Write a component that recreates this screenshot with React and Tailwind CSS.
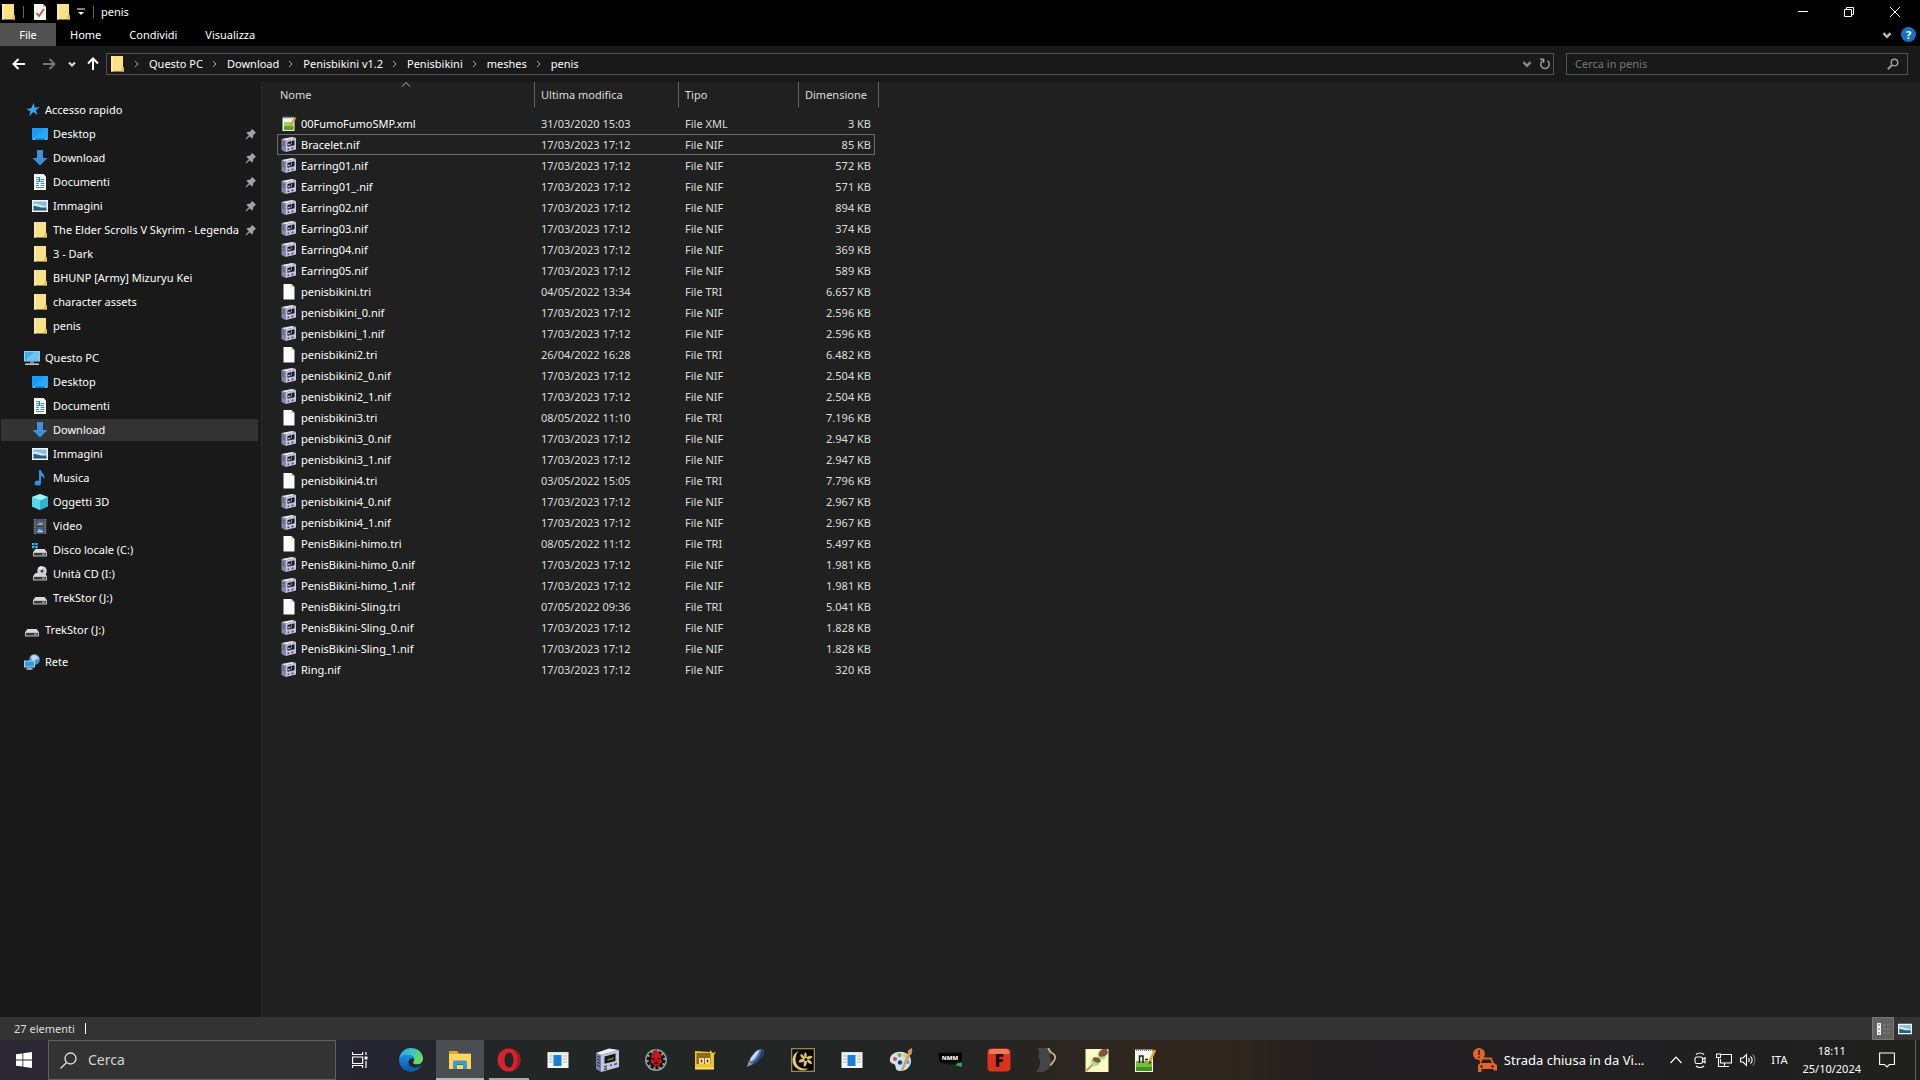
import React from 'react';

const QUICK_ACCESS = [
  { icon: 'desktop', label: 'Desktop', pinned: true },
  { icon: 'download', label: 'Download', pinned: true },
  { icon: 'document', label: 'Documenti', pinned: true },
  { icon: 'picture', label: 'Immagini', pinned: true },
  { icon: 'folder', label: 'The Elder Scrolls V Skyrim - Legenda', pinned: true },
  { icon: 'folder', label: '3 - Dark' },
  { icon: 'folder', label: 'BHUNP [Army] Mizuryu Kei' },
  { icon: 'folder', label: 'character assets' },
  { icon: 'folder', label: 'penis' },
];

const THIS_PC = [
  { icon: 'desktop', label: 'Desktop' },
  { icon: 'document', label: 'Documenti' },
  { icon: 'download', label: 'Download', active: true },
  { icon: 'picture', label: 'Immagini' },
  { icon: 'music', label: 'Musica' },
  { icon: 'cube', label: 'Oggetti 3D' },
  { icon: 'video', label: 'Video' },
  { icon: 'localDisk', label: 'Disco locale (C:)' },
  { icon: 'cdDrive', label: 'Unità CD (I:)' },
  { icon: 'drive', label: 'TrekStor (J:)' },
];

const GROUPS = [
  { icon: 'star', label: 'Accesso rapido', items: QUICK_ACCESS },
  { icon: 'pc', label: 'Questo PC', items: THIS_PC },
  { icon: 'drive', label: 'TrekStor (J:)', items: [] },
  { icon: 'network', label: 'Rete', items: [] },
];

const CRUMBS = ['Questo PC', 'Download', 'Penisbikini v1.2', 'Penisbikini', 'meshes', 'penis'];

const NIF_DATE = '17/03/2023 17:12';

const FILES = [
  ['00FumoFumoSMP.xml', '31/03/2020 15:03', 'XML', '3 KB'],
  ['Bracelet.nif', NIF_DATE, 'NIF', '85 KB'],
  ['Earring01.nif', NIF_DATE, 'NIF', '572 KB'],
  ['Earring01_.nif', NIF_DATE, 'NIF', '571 KB'],
  ['Earring02.nif', NIF_DATE, 'NIF', '894 KB'],
  ['Earring03.nif', NIF_DATE, 'NIF', '374 KB'],
  ['Earring04.nif', NIF_DATE, 'NIF', '369 KB'],
  ['Earring05.nif', NIF_DATE, 'NIF', '589 KB'],
  ['penisbikini.tri', '04/05/2022 13:34', 'TRI', '6.657 KB'],
  ['penisbikini_0.nif', NIF_DATE, 'NIF', '2.596 KB'],
  ['penisbikini_1.nif', NIF_DATE, 'NIF', '2.596 KB'],
  ['penisbikini2.tri', '26/04/2022 16:28', 'TRI', '6.482 KB'],
  ['penisbikini2_0.nif', NIF_DATE, 'NIF', '2.504 KB'],
  ['penisbikini2_1.nif', NIF_DATE, 'NIF', '2.504 KB'],
  ['penisbikini3.tri', '08/05/2022 11:10', 'TRI', '7.196 KB'],
  ['penisbikini3_0.nif', NIF_DATE, 'NIF', '2.947 KB'],
  ['penisbikini3_1.nif', NIF_DATE, 'NIF', '2.947 KB'],
  ['penisbikini4.tri', '03/05/2022 15:05', 'TRI', '7.796 KB'],
  ['penisbikini4_0.nif', NIF_DATE, 'NIF', '2.967 KB'],
  ['penisbikini4_1.nif', NIF_DATE, 'NIF', '2.967 KB'],
  ['PenisBikini-himo.tri', '08/05/2022 11:12', 'TRI', '5.497 KB'],
  ['PenisBikini-himo_0.nif', NIF_DATE, 'NIF', '1.981 KB'],
  ['PenisBikini-himo_1.nif', NIF_DATE, 'NIF', '1.981 KB'],
  ['PenisBikini-Sling.tri', '07/05/2022 09:36', 'TRI', '5.041 KB'],
  ['PenisBikini-Sling_0.nif', NIF_DATE, 'NIF', '1.828 KB'],
  ['PenisBikini-Sling_1.nif', NIF_DATE, 'NIF', '1.828 KB'],
  ['Ring.nif', NIF_DATE, 'NIF', '320 KB'],
];

const DRIVE_BODY = (
  <>
    <path d="M3.5 7h9l2.5 3.2H1z" fill="#d9d9d9" />
    <rect x="1" y="10" width="14" height="4.5" fill="#bfbfbf" />
    <rect x="2" y="11" width="12" height="2.5" fill="#3a3a3a" />
    <rect x="10.5" y="11.7" width="2" height="1" fill="#e8f4e8" />
  </>
);

/* 16x16 drawings for the tree, the list and the title bar */
const GLYPHS = {
  folder: (
    <>
      <path d="M2 0h12v11l1 1v3.5H2z" fill="#fbe08b" />
      <path d="M2 0h2v15.5H2z" fill="#ffeaa6" />
      <path d="M12.5 15.5v-3.2L14 10.6l1 1.4v3.5z" fill="#e3bd5a" />
    </>
  ),
  star: (
    <path
      d="M8.6 1l1.2 4.4 5.2-.2-4.3 3 1.9 4.8-4.3-3-4.2 4.5 1.3-5.3L1.3 7l4.8-.8z"
      transform="translate(1)"
      fill="#35a7ee"
    />
  ),
  desktop: (
    <>
      <rect y="2" width="16" height="12" fill="#1a9bf5" />
      <path d="M0 14L12 2h4v12z" fill="#35aefb" opacity=".6" />
      <path d="M0 12.5h16V14H0z" fill="#1378c9" />
      <path d="M1 13h2M13 13h2" stroke="#bfe4ff" />
    </>
  ),
  download: <path d="M5 0h6v8h4.5L8 15.500 .5 8H5z" fill="#3f8fdc" />,
  document: (
    <>
      <path d="M2 0h9.500L14 2.500V16H2z" fill="#f4f6f7" />
      <path d="M4 3.500h3M4 5.500h3M8.500 5.500h4M4 7.500h8M4 9.500h3M4 11.500h3M8.500 9.500h4M8.500 11.500h4M4 13.500h8" stroke="#4c90ab" />
      <path d="M7.500 3v5" stroke="#2f7594" />
    </>
  ),
  picture: (
    <>
      <rect y="2" width="16" height="12" fill="#f3f5f6" />
      <rect x="1.500" y="3.500" width="13" height="9" fill="#7fbdea" />
      <path d="M1.500 6c4-1.500 7 2 13 2v4.500h-13z" fill="#d5e9f3" />
      <path d="M1.500 8c3-.5 5 2 13 1.500v3h-13z" fill="#2d5e78" />
    </>
  ),
  music: (
    <>
      <path d="M7 0h2c.3 3 4.500 4.500 3.500 9.500C12 7.500 11 6.500 9 6v7H7z" fill="#2f93e0" />
      <ellipse cx="5.800" cy="13" rx="3.200" ry="2.600" fill="#2f93e0" />
    </>
  ),
  cube: (
    <>
      <path d="M8 0l8 3v9.500L8 16l-8-3.500V3z" fill="#2fb5cf" />
      <path d="M8 0l8 3-8 3.500L0 3z" fill="#a5eef5" />
      <path d="M0 3l8 3.500V16l-8-3.500z" fill="#5dd5e6" />
    </>
  ),
  video: (
    <>
      <rect x="1.500" y="1" width="13" height="15" fill="#4a4a4a" />
      <path d="M3 1v15M13 1v15" stroke="#a5a5a5" strokeDasharray="1 1" />
      <rect x="4.500" y="1.500" width="7" height="6" fill="#3f5f96" />
      <rect x="4.500" y="9" width="7" height="6" fill="#3f5f96" />
      <path d="M5 6.500l3-2 3 1v1.500H5z" fill="#b9a85c" />
      <path d="M5 14l2-3 4 2v1.500H5z" fill="#9fb9df" />
    </>
  ),
  drive: DRIVE_BODY,
  localDisk: (
    <>
      {DRIVE_BODY}
      <path d="M0 1h2.500v2.200H0zM3.200 1h2.500v2.200H3.200zM0 4h2.500v2.200H0zM3.200 4h2.500v2.200H3.200z" fill="#35b9e9" />
    </>
  ),
  cdDrive: (
    <>
      {DRIVE_BODY}
      <circle cx="10" cy="5" r="4.800" fill="#cfd1d3" />
      <path d="M10 5L6 2a5 5 0 014-1.800z" fill="#f5f5f5" />
      <circle cx="10" cy="5" r="1.500" fill="#3b3b3b" />
    </>
  ),
  pc: (
    <>
      <rect y="1" width="16" height="10.500" fill="#8bd0f5" />
      <rect x="1" y="2" width="14" height="8.500" fill="#43a9e8" />
      <path d="M1 10.500L10 2h5v8.500z" fill="#6fc2f2" />
      <path d="M6 11.500h4v2H6z" fill="#80909a" />
      <path d="M1 14.200h14" stroke="#c7d5dd" strokeWidth="1.500" />
    </>
  ),
  network: (
    <>
      <circle cx="10.500" cy="5.500" r="5.400" fill="#4b93c0" />
      <path d="M7 2c3-2 6-1 8 2-1 2-4 1-5 3S7 5 7 2z" fill="#b8dcec" />
      <rect y="6.500" width="11" height="7" fill="#9cd9fa" />
      <rect x="1" y="7.500" width="9" height="5" fill="#2f9be2" />
      <path d="M2.500 15h6M5.500 13.500V15" stroke="#b4c9d4" strokeWidth="1.300" />
    </>
  ),
  XML: (
    <>
      <path d="M1.500 1.500h12V15h-12z" fill="#f6f8ef" />
      <path d="M3 6h9.500v8H3z" fill="#9fd25a" />
      <path d="M3 10h9.500v4H3z" fill="#58a524" />
      <path d="M2 1.500h11" stroke="#888" strokeWidth="2" strokeDasharray="1 1" />
      <path d="M14.500 1.500L9 10" stroke="#e09a35" strokeWidth="2" />
    </>
  ),
  NIF: (
    <>
      <path d="M.5 2L4.500 3.500V15l-4-2z" fill="#8586a6" />
      <path d="M.5 2L11 0l4 1L4.500 3.500z" fill="#e6e6f6" />
      <path d="M4.500 3.500L15 1v11.500L4.500 15z" fill="#c6c6e2" />
      <path d="M6.500 5l7-1.700v4.900l-7 1.600z" fill="#17191d" />
      <path d="M7 7.500h2.500" stroke="#a9adc6" strokeWidth="1.600" />
      <path d="M10.500 4.500v3" stroke="#8388a0" />
      <path d="M6.500 12.500l1.800-.4M10.500 11.600l2-.4" stroke="#505172" strokeWidth="1.700" />
      <path d="M1.500 5l2 1M1.500 7.500l2 1" stroke="#3a3b55" strokeWidth=".9" />
    </>
  ),
  TRI: (
    <>
      <path d="M2.500 0h8l3 3v12.500h-11z" fill="#fafafa" />
      <path d="M10.500 0v3h3z" fill="#bcbcbc" />
    </>
  ),
};

function Glyph({ name, className = '' }) {
  return (
    <svg viewBox="0 0 16 16" className={`size-4 shrink-0 ${className}`} aria-hidden="true">
      {GLYPHS[name]}
    </svg>
  );
}

function Chevron({ className = '', d = 'M2 3.500l3 3 3-3' }) {
  return (
    <svg viewBox="0 0 10 10" className={`shrink-0 ${className}`} fill="none" stroke="currentColor" aria-hidden="true">
      <path d={d} />
    </svg>
  );
}

function TitleBar() {
  return (
    <header className="flex h-[23px] items-center justify-between bg-black">
      <div className="flex items-center">
        <Glyph name="folder" />
        <span className="ml-[7px] h-3 w-px bg-[#666]" />
        <button type="button" aria-label="Proprietà" className="ml-2">
          <svg viewBox="0 0 16 16" className="size-4" aria-hidden="true">
            <path d="M2 0h9l3 3v13H2z" fill="#f6f3f3" />
            <path d="M11 0v3h3z" fill="#bbb" />
            <path d="M4.500 9l2.500 3 5-7" fill="none" stroke="#bd5a43" strokeWidth="1.800" />
          </svg>
        </button>
        <button type="button" aria-label="Nuova cartella" className="ml-[7px]">
          <Glyph name="folder" />
        </button>
        <button type="button" aria-label="Personalizza barra" className="ml-[6px] text-white">
          <svg viewBox="0 0 8 8" className="size-2" aria-hidden="true">
            <path d="M0 1h8" stroke="currentColor" />
            <path d="M1 4h6L4 7z" fill="currentColor" />
          </svg>
        </button>
        <span className="ml-2 h-3 w-px bg-[#666]" />
        <h1 className="ml-[7px]">penis</h1>
      </div>
      <div className="flex pr-0.5">
        <button type="button" aria-label="Riduci a icona" className="flex h-[21px] w-[46px] items-center justify-center">
          <span className="h-px w-[10px] bg-white" />
        </button>
        <button type="button" aria-label="Ripristina" className="flex h-[21px] w-[46px] items-center justify-center">
          <svg viewBox="0 0 10 10" className="size-[10px]" fill="none" stroke="#fff" aria-hidden="true">
            <path d="M.5 2.500h7v7h-7zM2.500 2.500v-2h7v7h-2" />
          </svg>
        </button>
        <button type="button" aria-label="Chiudi" className="flex h-[21px] w-[46px] items-center justify-center">
          <svg viewBox="0 0 10 10" className="size-[10px]" stroke="#fff" aria-hidden="true">
            <path d="M0 0l10 10M10 0L0 10" />
          </svg>
        </button>
      </div>
    </header>
  );
}

function RibbonTabs() {
  return (
    <div className="flex h-[23px] items-center justify-between bg-black">
      <nav className="flex h-full items-center" aria-label="Barra multifunzione">
        <button type="button" className="h-full w-14 bg-[#515151]">File</button>
        <button type="button" className="px-[14px]">Home</button>
        <button type="button" className="px-[14px]">Condividi</button>
        <button type="button" className="px-[14px]">Visualizza</button>
      </nav>
      <div className="flex items-center gap-2 pr-1">
        <button type="button" aria-label="Espandi barra multifunzione">
          <Chevron className="size-3 stroke-2 text-[#bbb]" />
        </button>
        <button
          type="button"
          aria-label="Guida"
          className="size-[15px] rounded-full bg-[#1672c4] text-center text-[11px] leading-[15px] font-bold text-white"
        >
          ?
        </button>
      </div>
    </div>
  );
}

function AddressRow() {
  return (
    <div className="flex h-9 items-center gap-3 pr-3">
      <div className="flex min-w-0 flex-1 items-center">
        <div className="flex w-[106px] shrink-0 items-center pl-3">
          <button type="button" aria-label="Indietro">
            <svg viewBox="0 0 14 14" className="size-[14px]" fill="none" stroke="#fff" strokeWidth="2" aria-hidden="true">
              <path d="M13 7H2M6.500 2L1.500 7l5 5" />
            </svg>
          </button>
          <button type="button" aria-label="Avanti" className="ml-4">
            <svg viewBox="0 0 14 14" className="size-[14px]" fill="none" stroke="#777" strokeWidth="2" aria-hidden="true">
              <path d="M1 7h11M7.500 2l5 5-5 5" />
            </svg>
          </button>
          <button type="button" aria-label="Percorsi recenti" className="ml-[11px]">
            <Chevron className="size-[10px] stroke-2 text-[#ddd]" />
          </button>
          <button type="button" aria-label="Livello superiore" className="ml-[9px]">
            <svg viewBox="0 0 14 14" className="size-[14px]" fill="none" stroke="#fff" strokeWidth="2" aria-hidden="true">
              <path d="M7 13V2M2 6.500l5-5 5 5" />
            </svg>
          </button>
        </div>
        <div className="flex h-[22px] min-w-0 flex-1 items-center border border-[#535353] pr-0.5">
          <Glyph name="folder" className="ml-0.5" />
          <nav className="flex flex-1 items-center" aria-label="Percorso">
            {CRUMBS.map((crumb) => (
              <React.Fragment key={crumb}>
                <Chevron className="mx-[7px] size-[10px] text-[#aaa]" d="M3 2l3 3-3 3" />
                <a href="#" className="whitespace-nowrap">{crumb}</a>
              </React.Fragment>
            ))}
          </nav>
          <button type="button" aria-label="Percorsi precedenti">
            <Chevron className="size-3 stroke-2 text-[#888]" />
          </button>
          <button type="button" aria-label="Aggiorna" className="ml-[6px]">
            <svg viewBox="0 0 12 12" className="size-3" fill="none" stroke="#999" strokeWidth="1.500" aria-hidden="true">
              <path d="M3.800 2.700A4.200 4.200 0 108.500 2.900" />
              <path d="M1 1.200h3.600v3.600" />
            </svg>
          </button>
        </div>
      </div>
      <label className="flex h-[22px] w-[342px] shrink-0 items-center border border-[#535353] px-2">
        <input
          type="text"
          placeholder="Cerca in penis"
          aria-label="Cerca in penis"
          className="min-w-0 flex-1 bg-transparent outline-none placeholder:text-[#777]"
        />
        <svg viewBox="0 0 12 12" className="size-3" fill="none" stroke="#999" strokeWidth="1.500" aria-hidden="true">
          <circle cx="7.500" cy="4.500" r="3.300" />
          <path d="M5 7L.8 11.200" strokeWidth="2" />
        </svg>
      </label>
    </div>
  );
}

function TreeItem({ icon, label, pinned, active, root }) {
  return (
    <a
      href="#"
      className={`mx-px flex h-[22px] items-center gap-[5px] ${root ? 'pl-[23px]' : 'pl-[31px]'} ${active ? 'bg-[#333]' : ''}`}
    >
      <Glyph name={icon} />
      <span className="min-w-0 flex-1 whitespace-nowrap">{label}</span>
      {pinned && (
        <svg viewBox="0 0 12 12" className="mr-px size-3 shrink-0" aria-hidden="true">
          <path d="M7 .8l4.200 4.200-1.400.6-1.600 1.600-.3 2.600-1 .7-2.200-2.300L1.500 11.300l-.8.1.1-.8L3.800 7.300 1.600 5l.7-1 2.500-.2 1.700-1.700z" fill="#a0a4a8" />
        </svg>
      )}
    </a>
  );
}

function Sidebar() {
  return (
    <aside className="flex w-[261px] shrink-0 flex-col gap-[10px] bg-[#191919] pt-[17px] pr-0.5">
      {GROUPS.map((group, index) => (
        <nav key={index} aria-label={group.label} className="flex flex-col gap-0.5">
          <TreeItem root icon={group.icon} label={group.label} />
          {group.items.map((item) => (
            <TreeItem key={item.label} {...item} />
          ))}
        </nav>
      ))}
    </aside>
  );
}

function FileTable() {
  return (
    <table className="ml-[15px] table-fixed border-separate border-spacing-0 self-start text-[#dedede]">
      <colgroup>
        <col className="w-[258px]" />
        <col className="w-[144px]" />
        <col className="w-[120px]" />
        <col className="w-[76px]" />
        <col className="w-1" />
      </colgroup>
      <thead>
        <tr className="h-[25px] text-left">
          <th className="relative border-r border-[#636363] p-0 pl-[3px] font-normal">
            <button type="button">Nome</button>
            <Chevron className="absolute top-0 left-1/2 size-[10px] -translate-x-1/2 text-[#bbb]" d="M1 4.500l4-4 4 4" />
          </th>
          <th className="border-r border-[#636363] p-0 pl-[6px] font-normal">
            <button type="button">Ultima modifica</button>
          </th>
          <th className="border-r border-[#636363] p-0 pl-[6px] font-normal">
            <button type="button">Tipo</button>
          </th>
          <th colSpan="2" className="border-r border-[#636363] p-0 pl-[6px] font-normal">
            <button type="button">Dimensione</button>
          </th>
        </tr>
      </thead>
      <tbody className="before:block before:h-[6px]">
        {FILES.map(([name, date, kind, size], index) => {
          const line = index === 1 ? 'border-[#6b6b6b]' : 'border-transparent';
          return (
            <tr key={name} className="h-[21px] leading-[19px]">
              <td className={`border-y border-l p-0 pl-[3px] text-white ${line}`}>
                <span className="flex items-center gap-1">
                  <Glyph name={kind} />
                  {name}
                </span>
              </td>
              <td className={`border-y p-0 pl-[6px] ${line}`}>{date}</td>
              <td className={`border-y p-0 pl-[6px] ${line}`}>File {kind}</td>
              <td className={`border-y border-r p-0 pr-[3px] text-right ${line}`}>{size}</td>
              <td className="p-0" />
            </tr>
          );
        })}
      </tbody>
    </table>
  );
}

function StatusBar() {
  return (
    <footer className="flex h-[23px] items-center justify-between bg-[#333] text-[#dedede]">
      <p className="flex items-center gap-[10px] pl-[14px]">
        27 elementi
        <span className="h-[11px] w-px bg-white" />
      </p>
      <div className="flex h-full items-center pr-2">
        <button type="button" aria-label="Dettagli" className="flex h-full w-[22px] items-center border border-[#777] bg-[#626262] pl-1">
          <svg viewBox="0 0 14 12" className="h-3 w-[14px]" fill="none" aria-hidden="true">
            <path d="M.7.700h2.600v2.600H.7zM.7 4.700h2.600v2.600H.7zM.7 8.700h2.600v2.600H.7z" stroke="#fff" strokeWidth="1.200" />
            <path d="M6 2h3M10 2h3M6 6h3M10 6h3M6 10h3M10 10h3" stroke="#818181" />
          </svg>
        </button>
        <button type="button" aria-label="Anteprime grandi" className="ml-1">
          <Glyph name="picture" className="w-[14px]" />
        </button>
      </div>
    </footer>
  );
}

const WINDOW_APP = (
  <>
    <rect x="1.500" y="4" width="21" height="16" fill="#f4f6f7" />
    <path d="M3 8h4M3 11h4M3 14h4M17 8h4M17 11h4M17 14h4" stroke="#a9b4bb" />
    <path d="M2 5h20" stroke="#dfe6ea" strokeWidth="2" />
    <rect x="7.500" y="7" width="8" height="11" fill="#1a7fd2" />
  </>
);

/* 24x24 drawings for the pinned programs */
const APPS = [
  {
    label: 'Microsoft Edge',
    art: (
      <>
        <defs>
          <linearGradient id="edgeTop" x1="0" y1="0" x2="1" y2=".4">
            <stop offset="0" stopColor="#2ba9e0" />
            <stop offset=".6" stopColor="#3cc8c1" />
            <stop offset="1" stopColor="#6adb5b" />
          </linearGradient>
          <linearGradient id="edgeLow" x1="0" y1="0" x2="0" y2="1">
            <stop offset="0" stopColor="#1d95dc" />
            <stop offset="1" stopColor="#0c4ea5" />
          </linearGradient>
        </defs>
        <path d="M.2 11C.8 4.800 5.800 0 12 0c6.500 0 12 4.700 12 10.500 0 3.500-2.600 5.800-6 5.800-2.600 0-4-.9-4-1.900 0-.6 1.200-1.200 1.200-3C15.200 9 12.500 7 9 7 4.800 7 1.500 9 .2 11z" fill="url(#edgeTop)" />
        <path d="M.1 12C.5 8.500 4 6.500 8 6.500c4 0 7 2.200 7.200 4.800C14 10 12.800 10 11.800 10.500 9.500 11.800 9 14 9.500 16c.8 3.500 4 5.500 7.500 5.500-1.500 1.500-3.500 2.500-5.500 2.400C5 23.700 0 18.500.1 12z" fill="url(#edgeLow)" />
        <path d="M9.500 14c.2 3.500 3.500 6 8 5.300 2-.4 3.300-1.300 4.500-2.300-.5 3-4.500 6.500-9 6.500-4-.5-6-5-3.500-9.500z" fill="#0f5fae" />
      </>
    ),
  },
  {
    label: 'Esplora file',
    active: true,
    art: (
      <>
        <path d="M1 3h8l2 2.500h12V9H1z" fill="#e1a62f" />
        <path d="M1 6h22v15H1z" fill="#fbd75f" />
        <path d="M5 14.500a2 2 0 012-2h10a2 2 0 012 2V21h-4v-4H9v4H5z" fill="#3f9ad0" />
        <path d="M9 16h6v1H9z" fill="#24719f" />
      </>
    ),
  },
  {
    label: 'Opera',
    running: true,
    art: (
      <>
        <path fillRule="evenodd" d="M12 0.500a11.500 11.500 0 100 23 11.500 11.500 0 000-23zM12 4.500c2.600 0 4.500 3.300 4.500 7.500s-1.900 7.500-4.500 7.500-4.500-3.300-4.500-7.500 1.900-7.500 4.500-7.500z" fill="#d9232c" />
        <path d="M14 1c6 1 9.500 5.500 9.500 11S20 22 14 23c5-2 6.500-6.500 6.500-11S19 3 14 1z" fill="#a81822" />
      </>
    ),
  },
  { label: 'Applicazione', art: WINDOW_APP },
  {
    label: 'NifSkope',
    art: (
      <>
        <path d="M1 5l5 2v17l-5-3z" fill="#7b7ca3" />
        <path d="M1 5L14 .5 24 2 6 7z" fill="#f1f1fc" />
        <path d="M6 7l18-5v17L6 24z" fill="#c4c5e0" />
        <path d="M9.500 8.500l11-3v7.500l-11 2.800z" fill="#15181a" />
        <path d="M12.500 12.500l2-1.500 2 .5 2-2" fill="none" stroke="#6c982b" strokeWidth="1.200" />
        <path d="M9 19l3-.8M15 17.500l2-.5M19 16.500l3-.8M9 21.500l3-.8" stroke="#51527a" strokeWidth="1.800" />
        <path d="M2 8l3 1.500M2 11l3 1.500M2 14l3 1.500M2 17l3 1.500" stroke="#282a3c" />
      </>
    ),
  },
  {
    label: 'BodySlide',
    art: (
      <>
        <circle cx="12" cy="12" r="11" fill="#8ca09a" />
        <circle cx="12" cy="12" r="8" fill="none" stroke="#151515" strokeWidth="3" strokeDasharray="3 2" />
        <circle cx="12" cy="12" r="7.500" fill="#111" />
        <path d="M12 0l2.500 5 3 2-.5 4 1.500 3-3 2-1 3.500-2-2.500-1 3-2-3.500-3-2 1-3-.5-4 3-2.500z" fill="#c91722" />
        <path d="M8 10l3 2M16 10l-3 2M10 16l2-2 2 2" stroke="#280508" strokeWidth="1.500" fill="none" />
      </>
    ),
  },
  {
    label: 'Outfit Studio',
    art: (
      <>
        <path d="M2 3l15 1v-2l3 3 3-1-2 3v14H2z" fill="#efc52f" />
        <path d="M3.500 5h14v11h-14z" fill="#8e6721" />
        <rect x="6" y="10" width="5" height="6" rx="1" fill="#fde9a2" />
        <rect x="12" y="10" width="5" height="6" rx="1" fill="#fde9a2" />
        <path d="M8.500 11.500v3M14.500 11.500v3" stroke="#3c2b0c" strokeWidth="1.500" />
        <path d="M2 20.500h19" stroke="#f9e16e" strokeWidth="2" />
      </>
    ),
  },
  {
    label: 'Visualizzatore',
    art: (
      <>
        <path d="M19 1c4 0 4 4 1 8-4 5-9 8-12 7-2-2 0-7 4-11 3-3 5-4 7-4z" fill="#4a6fa8" />
        <path d="M17 2c1 1-1 4-3 7-2 3-5 5-6 4 0-2 2-5 4-7 2-3 4-4 5-4z" fill="#c4d8ee" />
        <path d="M7 12c0 2 2 4 4 4l-6 3z" fill="#8d96a3" />
        <path d="M20 1c3 1 2 5-1 9-3 3-6 5-8 5 5-3 8-8 9-14z" fill="#233b6c" />
      </>
    ),
  },
  {
    label: 'Creation Kit',
    art: (
      <>
        <rect x=".7" y=".7" width="22.600" height="22.600" fill="#080704" stroke="#a8925a" strokeWidth="1.200" />
        <path d="M8 2.500C-1 7-.5 19 9 22c3 .8 6 .3 8-1.500-8 1-12-3-12.500-8.500C4.500 8 5.500 5 8 2.500z" fill="#e6cb7e" />
        <path d="M14 4c2 1 2 3 1.500 5.500C17 8 19 7 21.500 8.500c-.5 2-2 2.500-4.500 3 2 .5 4 2 4 4.500-2 .5-4-1-5-3 0 2 0 4-2.500 6-1.500-2-1-4.500 0-6-2 1.500-3.500 2-6 1 .5-2 2.500-3.500 5-3.500-2-.5-3.500-2-3-4.500 2 .2 3 1.500 4 3C13 7.500 13 6 14 4z" fill="#dbc176" />
        <circle cx="15" cy="11.500" r="1.500" fill="#0b0906" />
      </>
    ),
  },
  { label: 'Applicazione', art: WINDOW_APP },
  {
    label: 'Paint',
    art: (
      <>
        <path d="M13 4C5 3 0 8 1 13c.5 3 4 2 5 4s0 6 5 6c7 0 11-5 11-10 0-5-4-8.500-9-9z" fill="#cfe1ee" />
        <circle cx="6" cy="11" r="2" fill="#d44a3b" />
        <circle cx="10.500" cy="7" r="2" fill="#7aad48" />
        <circle cx="16" cy="7.500" r="1.800" fill="#e5c84a" />
        <circle cx="11" cy="14.500" r="2.200" fill="#213a66" />
        <circle cx="18.500" cy="14" r="2" fill="#4b9fd6" />
        <path d="M12 22l5-13 3-4 1.500 1-1.500 4-6 13z" fill="#cfa067" />
        <path d="M19 6c-1-3 1-5 4-6 0 3 1 4-1 7z" fill="#d78a54" />
      </>
    ),
  },
  {
    label: 'Nexus Mod Manager',
    art: (
      <>
        <path d="M0 5l24-.5V14l-6 1H2z" fill="#050505" />
        <path d="M12 16l12-1.500V19z" fill="#24a650" />
        <path d="M2 14h18l-2 3-12-1z" fill="#09110b" />
        <text x="12" y="12" textAnchor="middle" fontSize="6" fontWeight="800" fill="#fff">NMM</text>
      </>
    ),
  },
  {
    label: 'FOMOD',
    art: (
      <>
        <rect x=".5" y=".5" width="23" height="23" rx="4" fill="#d9341c" />
        <path d="M2 3a3 3 0 013-2h14a3 3 0 013 2v3H2z" fill="#ec7a5e" />
        <text x="12" y="19" textAnchor="middle" fontSize="17" fontWeight="900" fill="#180604">F</text>
      </>
    ),
  },
  {
    label: 'Body Editor',
    art: (
      <>
        <path d="M2 0h12c2 3-1 6 0 9s3 4 1 8c-1 3-5 5-7 7H0c4-5 5-9 3-14-1-4 1-7-1-10z" fill="#454545" />
        <path d="M12 0c2 2 1 4 4 5 4 2 4 6 1 9-1 2-2 3-3 3" fill="none" stroke="#cbb57a" strokeWidth="1.800" />
      </>
    ),
  },
  {
    label: 'Dango',
    art: (
      <>
        <rect x=".5" y="1" width="23" height="23" fill="#fafac5" />
        <path d="M1 23L19 6" stroke="#bd965b" strokeWidth="2" />
        <circle cx="17" cy="7" r="4.500" fill="#a5dd98" />
        <circle cx="10.500" cy="13.500" r="4.500" fill="#a5dd98" />
        <path d="M14 5c1-3 4-5 8-4l1 4c-2 3-6 5-9 3z" fill="#8a5237" />
        <path d="M8 10c3-2 7 0 8 3-2 3-6 2-8-1z" fill="#8a5237" />
      </>
    ),
  },
  {
    label: 'Notepad++',
    art: (
      <>
        <path d="M1 1.500h18V24H1z" fill="#f6f9f0" />
        <path d="M2 13h16v10H2z" fill="#77bf3a" />
        <path d="M2 19h16v4H2z" fill="#3d961b" />
        <path d="M2 2h17" stroke="#777" strokeWidth="2" strokeDasharray="1 1" />
        <path d="M5.500 15V8h3.500v7M11 11.500h3M15.500 11.500h2" fill="none" stroke="#222" strokeWidth="1.500" />
        <path d="M21 2l-6 13" stroke="#e1a63a" strokeWidth="2.500" />
        <path d="M15.500 13l-1 4 3-3z" fill="#3c2b1c" />
      </>
    ),
  },
];

function Taskbar() {
  return (
    <div className="flex h-10 items-stretch justify-between bg-[linear-gradient(90deg,#2a2733_0%,#252530_20%,#222625_28%,#232524_50%,#30261e_60%,#2f261d_64%,#221f21_69%,#211f22_80%,#1f201e_100%)] text-white">
      <div className="flex items-stretch">
        <button type="button" aria-label="Start" className="flex w-12 items-center justify-center">
          <svg viewBox="0 0 16 16" className="size-4" fill="#fff" aria-hidden="true">
            <path d="M0 2.300L6.500 1.400v6.200H0zM7.300 1.300L16 0v7.600H7.300zM0 8.400h6.500v6.200L0 13.700zM7.300 8.400H16V16l-8.700-1.300z" />
          </svg>
        </button>
        <label className="flex w-72 items-center gap-[11px] border border-[#5f5f5f] bg-[#333] pl-[11px]">
          <svg viewBox="0 0 17 17" className="size-[17px] shrink-0" fill="none" stroke="#e5e5e5" strokeWidth="1.300" aria-hidden="true">
            <circle cx="10.500" cy="6.500" r="5.500" />
            <path d="M6.500 10.500L.5 16.500" />
          </svg>
          <input
            type="text"
            placeholder="Cerca"
            aria-label="Cerca"
            className="min-w-0 flex-1 bg-transparent text-sm outline-none placeholder:text-[#d5d5d5]"
          />
        </label>
        <button type="button" aria-label="Visualizzazione attività" className="mr-[3px] flex w-12 items-center justify-center">
          <svg viewBox="0 0 16 16" className="size-4" fill="none" stroke="#fff" strokeWidth="1.200" aria-hidden="true">
            <path d="M.6 0v2.500h10V0M.6 5h10v6.500H.6zM.6 16v-2.500h10V16M14 0v3M14 9v7" />
            <path d="M12.500 4.500h3v3h-3z" fill="#fff" stroke="none" />
          </svg>
        </button>
        <div className="flex gap-px">
          {APPS.map((app, index) => (
            <button
              key={index}
              type="button"
              aria-label={app.label}
              className={`flex w-12 flex-col items-center justify-end ${app.active ? 'bg-[#4b4e50]' : ''}`}
            >
              <svg viewBox="0 0 24 24" className="mb-[6px] size-6" aria-hidden="true">
                {app.art}
              </svg>
              <span className={`h-0.5 ${app.active ? 'w-full bg-[#b9b9bb]' : 'w-10'} ${app.running ? 'bg-[#a9a9ab]' : ''}`} />
            </button>
          ))}
        </div>
      </div>

      <div className="flex items-center">
        <button type="button" className="flex items-center gap-[7px] text-[13px] whitespace-nowrap">
          <svg viewBox="0 0 24 24" className="size-6" aria-hidden="true">
            <path d="M6.500 11.500L9 9.500h9.500L21 15l3 2v5.500h-3.500V21H8.500v3H5v-7l2-1.500z" fill="#e0652a" />
            <path d="M9.500 11.500h8L19 15H8z" fill="#272321" />
            <circle cx="8.500" cy="18.500" r="1.200" fill="#272321" />
            <circle cx="19.500" cy="18.500" r="1.200" fill="#272321" />
            <circle cx="6" cy="6" r="6" fill="#e0652a" />
            <path d="M6 2v5M6 8.500v1.500" stroke="#272321" strokeWidth="1.600" />
          </svg>
          Strada chiusa in da Vi...
        </button>
        <button type="button" aria-label="Mostra icone nascoste" className="ml-[26px]">
          <svg viewBox="0 0 12 8" className="h-2 w-3" fill="none" stroke="#fff" strokeWidth="1.200" aria-hidden="true">
            <path d="M.5 7L6 1.200 11.500 7" />
          </svg>
        </button>
        <button type="button" aria-label="Riunione" className="ml-[10px]">
          <svg viewBox="0 0 16 16" className="size-4" fill="none" stroke="#fff" strokeWidth="1.100" aria-hidden="true">
            <rect x="3" y="5" width="7.500" height="6.500" rx="1.800" />
            <path d="M10.500 7.300l2.500-1.500v5l-2.500-1.500M4 2.500c2-2 6-2 8 0M4 14c2 2 6 2 8 0" />
          </svg>
        </button>
        <button type="button" aria-label="Rete" className="ml-2">
          <svg viewBox="0 0 16 16" className="size-4" fill="none" stroke="#fff" strokeWidth="1.100" aria-hidden="true">
            <path d="M5 2.500h10.500v8.500H4.500V7M8.500 11v3.500M5 14.500h8M.5 2h4v3.500h-4zM2.500 5.500v9H5" />
          </svg>
        </button>
        <button type="button" aria-label="Volume" className="ml-2">
          <svg viewBox="0 0 16 16" className="size-4" fill="none" stroke="#fff" strokeWidth="1.100" aria-hidden="true">
            <path d="M.6 6h2.400l3.500-3.500v11L3 10H.6zM8.500 6c1 1.200 1 2.800 0 4M10.500 4.300c2 2.200 2 5.200 0 7.400" />
            <path d="M12.700 2.500c3 3.200 3 7.800 0 11" stroke="#777" />
          </svg>
        </button>
        <button type="button" className="ml-[15px]">ITA</button>
        <button type="button" className="ml-[15px] flex flex-col items-center leading-[18px]">
          <span>18:11</span>
          <span>25/10/2024</span>
        </button>
        <button type="button" aria-label="Notifiche" className="ml-[18px]">
          <svg viewBox="0 0 16 16" className="size-4" fill="none" stroke="#fff" strokeWidth="1.100" aria-hidden="true">
            <path d="M.6 1h14.800v11.500h-5L8 15l-2.400-2.500h-5z" />
          </svg>
        </button>
        <button type="button" aria-label="Mostra desktop" className="ml-5 h-full w-[5px] border-l border-[#656565]" />
      </div>
    </div>
  );
}

export default function App() {
  return (
    <div className="flex min-h-screen flex-col bg-[#191919] font-['Noto_Sans','Open_Sans',sans-serif] text-[11px] leading-4 text-white">
      <TitleBar />
      <RibbonTabs />
      <AddressRow />
      <main className="flex flex-1">
        <Sidebar />
        <section className="flex flex-1 border-l border-[#2b2b2b] bg-[#202020]" aria-label="File">
          <FileTable />
        </section>
      </main>
      <StatusBar />
      <Taskbar />
    </div>
  );
}
